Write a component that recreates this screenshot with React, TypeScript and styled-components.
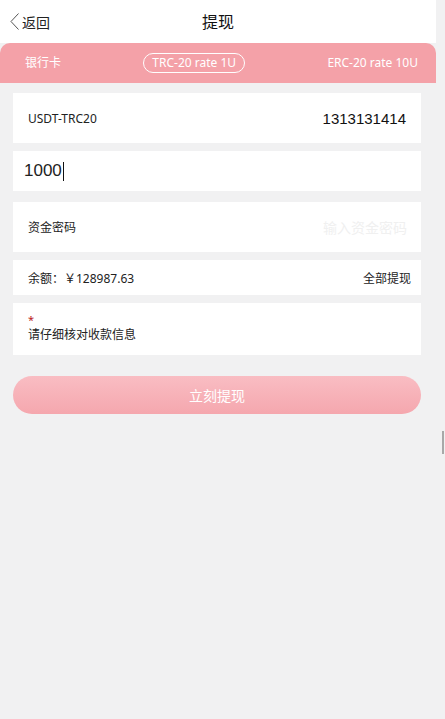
import styled, { createGlobalStyle } from "styled-components";

const Global = createGlobalStyle`
    html, body {
        margin: 0;
        padding: 0;
        background: #f1f1f2;
        font-family: "Noto Sans", "Noto Sans CJK SC", sans-serif;
    }
`

const Pagina = styled.div`
    width: 436px;
    min-height: 719px;
    background: #f1f1f2;
    position: relative;
`

const Topo = styled.header`
    height: 43px;
    background: #ffffff;
    display: flex;
    align-items: center;
    position: relative;
`

const Voltar = styled.div`
    display: flex;
    align-items: center;
    gap: 3px;
    padding-left: 10px;
    font-size: 14px;
    color: #222;
    font-family: "Noto Sans CJK SC", sans-serif;
`

const Titulo = styled.h1`
    position: absolute;
    left: 0;
    right: 0;
    top: 10px;
    margin: 0;
    text-align: center;
    font-size: 16px;
    line-height: 22px;
    font-weight: 400;
    color: #111;
    pointer-events: none;
    font-family: "Noto Sans CJK SC", sans-serif;
`

const Abas = styled.nav`
    height: 40px;
    background: #f4a1a8;
    border-radius: 10px 10px 0 0;
    display: flex;
    align-items: center;
    justify-content: space-between;
    padding: 0 17px 0 24px;
`

const Aba = styled.span<{ $ativa?: boolean }>`
    color: #ffffff;
    font-size: 12px;
    line-height: 18px;
    padding: 0 8px;
    border: 1px solid ${(p) => (p.$ativa ? "#ffffff" : "transparent")};
    border-radius: 10px;
    margin-left: ${(p) => (p.$ativa ? "0" : "-8px")};
    margin-right: ${(p) => (p.$ativa ? "0" : "-8px")};
`

const Lista = styled.main`
    display: flex;
    flex-direction: column;
    gap: 8px;
    padding: 10px 15px 0 13px;
`

const Cartao = styled.div<{ $altura: number }>`
    background: #ffffff;
    height: ${(p) => p.$altura}px;
    display: flex;
    align-items: center;
    justify-content: space-between;
    padding: 0 10px 0 15px;
    font-size: 12px;
    color: #222;
`

const Valor = styled.span`
    font-size: 15px;
    color: #111;
    font-family: "Liberation Sans", sans-serif;
    padding-right: 5px;
`

const Entrada = styled.div`
    background: #ffffff;
    height: 40px;
    display: flex;
    align-items: center;
    padding-left: 11px;
    font-size: 17px;
    color: #222;
    font-family: "Liberation Sans", sans-serif;
`

const Cursor = styled.span`
    display: inline-block;
    width: 1px;
    height: 19px;
    background: #111;
    margin-left: 1px;
`

const Marcador = styled.span`
    font-size: 14px;
    color: #f0f0f0;
    padding-right: 4px;
`

const Aviso = styled.div`
    background: #ffffff;
    height: 52px;
    padding: 11px 15px 0;
    box-sizing: border-box;
    font-size: 12px;
    color: #222;
    display: flex;
    flex-direction: column;
`

const Estrela = styled.span`
    color: #b22;
    font-size: 11px;
    line-height: 12px;
    height: 11px;
`

const Botao = styled.button`
    margin: 21px 15px 0 13px;
    width: 408px;
    height: 38px;
    border: none;
    border-radius: 19px;
    background: linear-gradient(180deg, #f9bdc3 0%, #f5a7ae 100%);
    color: #ffffff;
    font-size: 14px;
    font-family: "Noto Sans CJK SC", sans-serif;
`

const Rolagem = styled.div`
    position: absolute;
    left: 442px;
    top: 431px;
    width: 2px;
    height: 23px;
    background: #a8a8a8;
`

export default function App() {
    return (
        <Pagina>
            <Global />
            <Topo>
                <Voltar>
                    <svg width="9" height="17" viewBox="0 0 9 17">
                        <path d="M8.5 0.5 L1 8.5 L8.5 16.5" fill="none" stroke="#555" strokeWidth="1" />
                    </svg>
                    返回
                </Voltar>
                <Titulo>提现</Titulo>
            </Topo>
            <Abas>
                <Aba>银行卡</Aba>
                <Aba $ativa>TRC-20 rate 1U</Aba>
                <Aba>ERC-20 rate 10U</Aba>
            </Abas>
            <Lista>
                <Cartao $altura={50}>
                    <span>USDT-TRC20</span>
                    <Valor>1313131414</Valor>
                </Cartao>
                <Entrada>
                    1000<Cursor />
                </Entrada>
                <Cartao $altura={50} style={{ marginTop: 3 }}>
                    <span>资金密码</span>
                    <Marcador>输入资金密码</Marcador>
                </Cartao>
                <Cartao $altura={35}>
                    <span>余额：￥128987.63</span>
                    <span>全部提现</span>
                </Cartao>
                <Aviso>
                    <Estrela>*</Estrela>
                    <span>请仔细核对收款信息</span>
                </Aviso>
            </Lista>
            <Botao>立刻提现</Botao>
            <Rolagem />
        </Pagina>
    )
}
